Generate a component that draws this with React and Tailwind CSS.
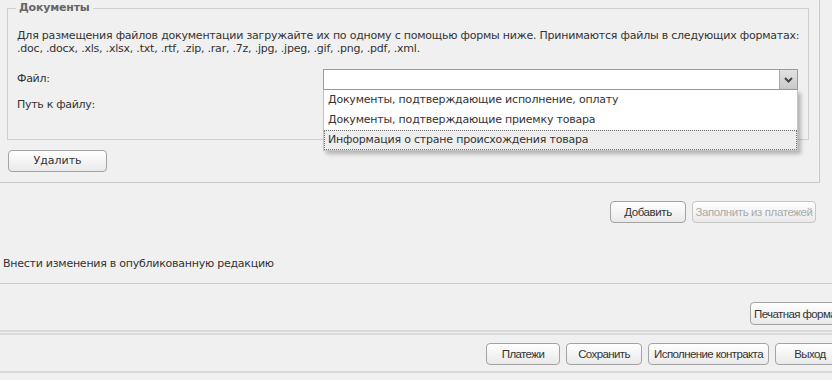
import React from 'react';

const btn =
  'h-[22px] rounded-[4px] border border-[#a3a3a3] bg-gradient-to-b from-white to-[#e9e9e9] text-[#333] leading-[20px] whitespace-nowrap shrink-0';

const Button = ({ children, className = '' }) => (
  <button type="button" className={`${btn} ${className}`}>
    {children}
  </button>
);

const options = [
  'Документы, подтверждающие исполнение, оплату',
  'Документы, подтверждающие приемку товара',
  'Информация о стране происхождения товара',
];

export default function App() {
  return (
    <div className="w-[832px] h-[380px] overflow-hidden bg-[#f0f0f0] text-[#333] font-['DejaVu_Sans',sans-serif] text-[11px]">
      {/* upper panel */}
      <div className="relative w-[820px] h-[183px] border-r border-b border-[#c9c9c9]">
        <fieldset className="ml-[7px] w-[802px] h-[140px] border border-[#cfcfcf] px-[9px]">
          <legend className="ml-[-1px] px-[3px] font-bold text-[11px] leading-[16px] text-[#666] tracking-[-0.2px]">
            Документы
          </legend>
          <p className="mt-[13px] text-[11px] leading-[13px] tracking-[-0.22px] whitespace-nowrap">
            Для размещения файлов документации загружайте их по одному с помощью формы ниже. Принимаются файлы в
            следующих форматах:
            <br />
            .doc, .docx, .xls, .xlsx, .txt, .rtf, .zip, .rar, .7z, .jpg, .jpeg, .gif, .png, .pdf, .xml.
          </p>

          <div className="mt-[14px] flex items-center h-[21px]">
            <span className="w-[306px] shrink-0 tracking-[-0.3px]">Файл:</span>
            <div className="relative w-[475px] h-[21px]">
              <div className="flex h-full border border-[#9a9a9a] bg-white">
                <div className="flex-1" />
                <div className="w-[18px] border-l border-[#a8a8a8] bg-gradient-to-b from-[#e2e2e2] to-[#c9c9c9] flex items-center justify-center">
                  <svg width="9" height="6" viewBox="0 0 9 6">
                    <polyline points="1,1 4.5,4.5 8,1" fill="none" stroke="#444" strokeWidth="2" />
                  </svg>
                </div>
              </div>
              {/* open list */}
              <ul className="absolute left-0 top-[21px] w-[475px] bg-white border-l border-r border-b border-[#c4c4c4] shadow-[3px_3px_4px_rgba(0,0,0,0.25)] z-10">
                {options.map((o, i) => (
                  <li
                    key={o}
                    className={`h-[20px] leading-[18px] pl-[3px] tracking-[-0.2px] ${
                      i === 2 ? 'bg-[#eeeeee] border border-dotted border-[#6f6f6f]' : 'border border-transparent'
                    }`}
                  >
                    {o}
                  </li>
                ))}
              </ul>
            </div>
          </div>

          <div className="mt-[6px] h-[18px] leading-[18px] tracking-[-0.3px]">Путь к файлу:</div>
        </fieldset>

        <Button className="absolute left-[8px] top-[150px] w-[99px] text-[11px]">Удалить</Button>
      </div>

      {/* add buttons */}
      <div className="mt-[18px] flex justify-end gap-[6px] pr-[16px] font-['Liberation_Sans',sans-serif] text-[11.5px] tracking-[-0.4px]">
        <Button className="w-[76px]">Добавить</Button>
        <Button className="w-[124px] text-[#aaa] border-[#c6c6c6]">Заполнить из платежей</Button>
      </div>

      <div className="mt-[33px] pl-[3px] leading-[16px] tracking-[-0.25px]">
        Внести изменения в опубликованную редакцию
      </div>

      <div className="mt-[11px] border-t border-[#cbcbcb]" />

      {/* print */}
      <div className="mt-[18px] flex pl-[750px] font-['Liberation_Sans',sans-serif] text-[11.5px] tracking-[-0.6px]">
        <Button className="h-[23px] w-[90px] text-left pl-[3px]">Печатная форма</Button>
      </div>

      <div className="mt-[5px] h-[5px] border-t-2 border-b-2 border-[#dadada]" />

      {/* bottom actions */}
      <div className="mt-[8px] flex gap-[6px] pl-[486px] font-['Liberation_Sans',sans-serif] text-[11.5px] tracking-[-0.6px]">
        <Button className="w-[74px]">Платежи</Button>
        <Button className="w-[76px]">Сохранить</Button>
        <Button className="w-[121px]">Исполнение контракта</Button>
        <Button className="w-[70px]">Выход</Button>
      </div>

      <div className="mt-[6px] border-t-2 border-[#dadada]" />
    </div>
  );
}
